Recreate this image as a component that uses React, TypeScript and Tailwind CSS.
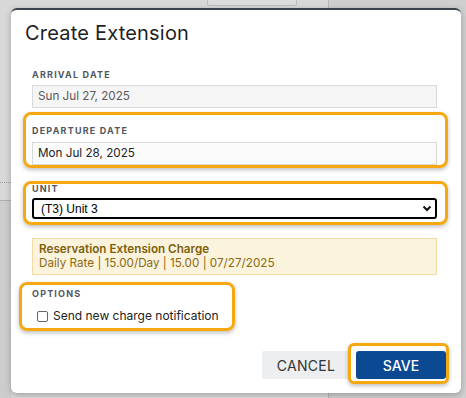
import React from "react";

const label = "block text-[9px] font-bold tracking-[1.2px] uppercase text-[#4f5761]";

export default function App() {
  return (
    <div
      className="relative w-[466px] h-[398px] overflow-hidden bg-[#d8d8d8]"
      style={{ fontFamily: "Inter, 'Open Sans', sans-serif" }}
    >
      {/* page behind overlay */}
      <div className="absolute left-[207px] top-[-4px] w-[90px] h-[10px] border border-[#bdbdbd] rounded-[2px] bg-[#dcdcdc]" />
      <div className="absolute left-[328px] top-0 w-[138px] h-[398px] border-l border-[#b8b8b8] bg-[#cfcfcf]" />
      <div className="absolute left-0 top-[182px] w-[11px] border-t border-dotted border-[#9a9a9a]" />
      <div className="absolute left-0 top-[200px] w-[11px] h-[198px] border-t border-[#b0b0b0] bg-[#cdcdcd]" />

      <div className="relative pt-[8px] pl-[11px]">
        <div className="w-[450px] h-[385px] bg-white rounded-[6px] border-t-2 border-[#3a424e] shadow-[0_2px_6px_rgba(0,0,0,0.25)]">
          <div className="pl-[14px] pt-[9px] text-[20px] leading-[28px] text-[#1f1f1f] tracking-[0.2px]">Create Extension</div>

          <div className="pl-[21px] pr-[24px]">
            {/* Arrival */}
            <div className={`${label} mt-[22px] leading-[12px]`}>Arrival Date</div>
            <div className="mt-[4px] h-[23px] border border-[#dadada] bg-[#f5f5f5] flex items-center pl-[5px] text-[11.7px] text-[#5a5a5a]">
              Sun Jul 27, 2025
            </div>

            {/* Departure */}
            <div className="mt-[4px] -ml-[9px] -mr-[11px] border-[3px] border-[#f5a80f] rounded-[8px] pl-[6px] pr-[8px] pt-[10px] shadow-[0_2px_4px_rgba(0,0,0,0.25)]">
              <div className={`${label} leading-[12px]`}>Departure Date</div>
              <div className="mt-[5px] h-[23px] border border-[#dadada] bg-[#fbfbfb] flex items-center pl-[5px] text-[11.7px] text-[#222]">
                Mon Jul 28, 2025
              </div>
            </div>

            {/* Unit */}
            <div className="mt-[13px] -ml-[9px] -mr-[11px] border-[3px] border-[#f5a80f] rounded-[8px] pl-[6px] pr-[8px] pb-[3px] shadow-[0_2px_4px_rgba(0,0,0,0.25)]">
              <div className={`${label} leading-[9px]`}>Unit</div>
              <div className="relative mt-[5px] h-[21px] border-2 border-black rounded-[3px] bg-white flex items-center pl-[7px] text-[12px] text-black" style={{ fontFamily: "'Liberation Sans', Arial, sans-serif" }}>
                (T3) Unit 3
                <svg className="absolute right-[3px] top-[5px]" width="10" height="7" viewBox="0 0 10 7">
                  <path d="M1.5 1.5 L5 5 L8.5 1.5" fill="none" stroke="#111" strokeWidth="2" />
                </svg>
              </div>
            </div>

            {/* Charge */}
            <div className="mt-[13px] h-[37px] border border-[#f0dba4] bg-[#fcf3dd] pl-[6px] pt-[3px] text-[11.7px] leading-[14px] text-[#8a6a12]">
              <div className="font-semibold text-[#7d5f0c]">Reservation Extension Charge</div>
              <div>Daily Rate | 15.00/Day | 15.00 | 07/27/2025</div>
            </div>

            {/* Options */}
            <div className="mt-[7px] -ml-[13px] w-[216px] border-[3px] border-[#f5a80f] rounded-[8px] pl-[10px] pt-[4px] pb-[5px] shadow-[0_2px_4px_rgba(0,0,0,0.25)]">
              <div className={`${label} leading-[10px]`}>Options</div>
              <div className="mt-[10px] flex items-center h-[14px] pl-[5px]">
                <span className="w-[11px] h-[11px] border border-[#666] rounded-[2px] bg-white" />
                <span className="ml-[5px] text-[12px] text-[#222]">Send new charge notification</span>
              </div>
            </div>

            {/* Buttons */}
            <div className="mt-[12px] -mr-[12px] flex justify-end items-start">
              <button className="mt-[8px] w-[88px] h-[28px] bg-[#eceef0] text-[14px] text-[#333] tracking-[0.3px] rounded-l-[2px]">
                CANCEL
              </button>
              <div className="relative -ml-[2px] border-[3px] border-[#f5a80f] rounded-[6px] pt-[5px] pl-[5px] pb-[2px] shadow-[0_2px_4px_rgba(0,0,0,0.25)] bg-white">
                <button className="w-[90px] h-[28px] bg-[#0b4a92] rounded-[3px] text-white text-[14px] font-medium">
                  SAVE
                </button>
              </div>
            </div>
          </div>
        </div>
      </div>
    </div>
  );
}
